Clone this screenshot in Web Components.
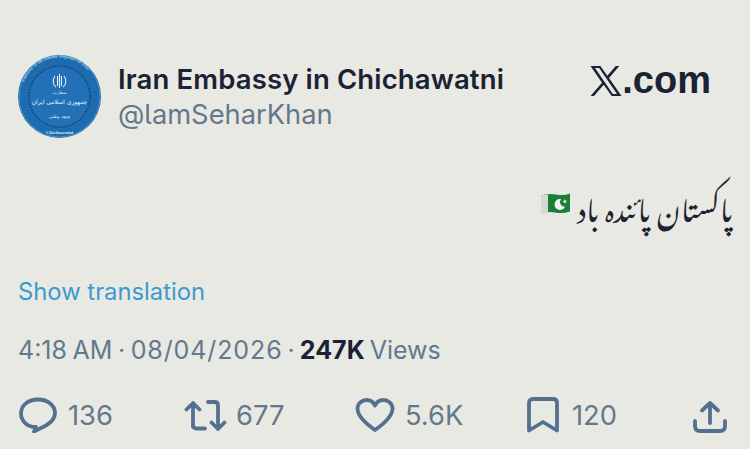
<!DOCTYPE html>
<html lang="en"><head><meta charset="utf-8"><style>
html,body{margin:0;padding:0;background:#e9e9e3}
body{width:750px;height:449px;overflow:hidden;font-family:Inter,"Liberation Sans",sans-serif}
</style></head><body>
<tweet-card>
<tweet-header slot="header" name="Iran Embassy in Chichawatni" handle="@lamSeharKhan"></tweet-header>
<tweet-body slot="body"></tweet-body>
<tweet-meta slot="meta"></tweet-meta>
<tweet-actions slot="actions"></tweet-actions>
</tweet-card>
<script>
const def=(n,html)=>customElements.define(n,class extends HTMLElement{constructor(){super();this.attachShadow({mode:'open'}).innerHTML=typeof html==='function'?html(this):html}});
def('tweet-card',`<style>:host{display:flex;flex-direction:column;height:449px;box-sizing:border-box;padding:55px 18px 0}
</style><slot name="header"></slot><slot name="body"></slot><slot name="meta"></slot><slot name="actions"></slot>`);
def('embassy-avatar',`<style>:host{display:block;width:83px;height:83px;flex:none}svg{display:block}</style>
<svg width="83" height="83" viewBox="0 0 83 83"><defs><path id="a" d="M5 30A38 38 0 0 1 78 30"/></defs>
<circle cx="41.500" cy="41.500" r="41.500" fill="#1d6cb0"/><circle cx="41.500" cy="41.500" r="30.500" fill="#2270b5" stroke="#123f78" stroke-width="1.500" stroke-dasharray="1.500 1.500"/>
<circle cx="41.500" cy="41.500" r="40.500" fill="none" stroke="#4a90c8" stroke-width="1"/>
<path d="M37 21c-3 4-2 9 1 11M46 21c3 4 2 9-1 11M41.500 19v14M39.500 21v10M43.500 21v10" stroke="#e4edf5" stroke-width="1.100" fill="none"/>
<text x="41.500" y="39" font-size="4.500" fill="#dfeaf4" text-anchor="middle" font-family="DejaVu Sans">سفارت</text>
<text x="41.500" y="49" font-size="6" fill="#eef4f9" text-anchor="middle" font-family="DejaVu Sans">جمهوری اسلامی ایران</text>
<text x="41.500" y="63" font-size="4.500" fill="#dfeaf4" text-anchor="middle" font-family="DejaVu Sans">چیچه وطنی</text>
<text font-size="4.500" font-weight="700" fill="#a9c8e4" font-family="Liberation Serif"><textPath href="#a" startOffset="3%">Embassy of the Islamic Republic of Iran</textPath></text>
<text x="41.500" y="79" font-size="5" font-weight="700" fill="#d5e4f1" text-anchor="middle" font-family="Liberation Serif">Chichawatni</text>
</svg>`);
def('tweet-header',h=>`<style>:host{display:flex;align-items:center;height:83px}
.id{display:flex;flex-direction:column;margin-left:17px;flex:1}
.n{font-size:27.500px;font-weight:600;line-height:35px;color:#1a2233;letter-spacing:.14px}
.h{font-size:27.300px;line-height:35px;color:#64788c;font-feature-settings:"cv05"}
.x{display:flex;align-items:center;font-size:38px;font-weight:700;color:#1a2233;margin:0 21px 0 0;position:relative;top:-16px;letter-spacing:0;font-family:"Liberation Sans",sans-serif}
svg{display:block}</style>
<embassy-avatar></embassy-avatar><div class="id"><span class="n">${h.getAttribute('name')}</span><span class="h">${h.getAttribute('handle')}</span></div>
<div class="x"><svg width="32" height="30" viewBox="0 0 32 30"><path fill-rule="evenodd" fill="#1a2233" d="M.5 0h9.800l7 9.700L25.800 0h3.500L19 11.900 31.500 30h-9.800l-8-11.200L4 30H.5l11.500-13.200zM5 2l17.800 26h4.200L9.200 2z"/></svg>.com</div>`);
def('flag-pk',`<style>:host{display:inline-block;width:31px;height:22px;flex:none;margin-top:-1px}svg{display:block}</style>
<svg width="31" height="22" viewBox="0 0 31 22"><path d="M1 2.500q7-2.500 15-1t14-1v18q-7 2.500-15 1T1 21z" fill="#1c7f35"/><path d="M1 2.500q3-1 7-1v19q-4 0-7 .5z" fill="#d6d9d2"/>
<path d="M21 6a5.500 5.500 0 1 0 4 8 5 5 0 0 1-4-8z" fill="#f2f6f0"/><path d="m24.500 6 .6 1.600 1.700-.2-1 1.300.9 1.400-1.600-.5-1 1.200v-1.600l-1.600-.6 1.600-.5z" fill="#f2f6f0"/></svg>`);
def('tweet-body',`<style>:host{display:flex;justify-content:flex-end;align-items:center;gap:7px;height:90px;margin-top:21px;margin-right:-1px}
.u{font:27.800px "Noto Nastaliq Urdu","Noto Naskh Arabic","DejaVu Sans",sans-serif;color:#1a2233;direction:rtl;line-height:50px;display:inline-block;word-spacing:2.500px}</style>
<flag-pk></flag-pk><span class="u" lang="ur" dir="rtl">پاکستان پائندہ باد</span>`);
def('tweet-meta',`<style>:host{display:block;margin-top:29px}
.t{font-size:23.800px;line-height:28px;color:#3c9ad0;display:block}
.m{font-size:25px;line-height:28px;color:#64788c;display:block;margin-top:30px}
.a{word-spacing:-1.500px}.d{letter-spacing:.9px}.s{word-spacing:-2px}
b{font-weight:700;color:#1a2233}</style>
<span class="t">Show translation</span><span class="m"><span class="a">4:18 AM · </span><span class="d">08/04/2026</span><span class="s"> · <b>247K</b> Views</span></span>`);
def('tweet-action',h=>`<style>:host{display:flex;align-items:center;gap:10px;font-size:27.300px;color:#64788c}svg{display:block}</style><slot></slot>`);
const S='fill="none" stroke="#55708f" stroke-width="3.800" stroke-linejoin="round" stroke-linecap="round"';
def('tweet-actions',`<style>:host{display:grid;grid-template-columns:166px 171px 172px 166px auto;align-items:center;margin-top:29px;height:44px}
svg{display:block}</style>
<tweet-action><svg width="40" height="36" viewBox="0 0 40 36"><path ${S} d="M20 2.500C9.500 2.500 3 9 3 16.500S9.500 30 17 30h1l-2 4.500L28 28.500C33 25.500 37 21.500 37 16 37 8.500 30 2.500 20 2.500z"/></svg>136</tweet-action>
<tweet-action style="gap:8px"><svg width="44" height="36" viewBox="0 0 44 36"><path ${S} d="M9 30V6M2.500 12.500 9 6l6.500 6.500M9 28q0 3.500 3.500 3.500H21M24 5h6.500q3.500 0 3.500 3.500V32M27.500 25.500 34 32l6.500-6.500"/></svg>677</tweet-action>
<tweet-action><svg width="40" height="36" viewBox="0 0 40 36"><path ${S} d="M20 33C10 26 2.500 19 2.500 11.500 2.500 6.500 7 3 11.500 3 15.500 3 18.500 5 20 8.500 21.500 5 24.500 3 28.500 3 33 3 37.500 6.500 37.500 11.500 37.500 19 30 26 20 33z"/></svg>5.6K</tweet-action>
<tweet-action style="gap:13px"><svg width="32" height="36" viewBox="0 0 32 36"><path ${S} stroke-linejoin="miter" d="M2 33.500V6q0-4 4-4h20q4 0 4 4v27.500L16 25z"/></svg>120</tweet-action>
<tweet-action><svg width="34" height="36" viewBox="0 0 34 36"><path ${S} d="M17 26V6M9 13.500 17 6l8 7.500M2 24v5q0 5 5 5h20q5 0 5-5v-5"/></svg></tweet-action>`);
</script>
</body></html>
